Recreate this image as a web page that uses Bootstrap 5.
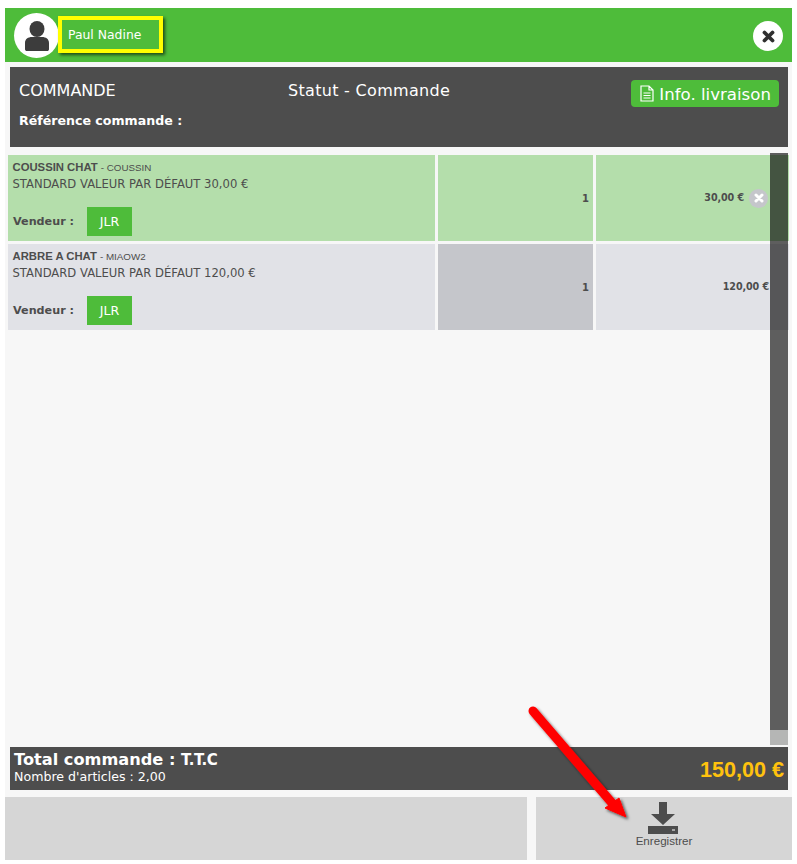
<!DOCTYPE html>
<html>
<head>
  <meta charset="UTF-8">
  <title>Commande</title>
  <link href="https://cdn.jsdelivr.net/npm/bootstrap@5.3.2/dist/css/bootstrap.min.css" rel="stylesheet">
  <style>
    html, body { height: 864px; overflow: hidden; background: #fff; }
    body { font-family: "DejaVu Sans", Verdana, sans-serif; color: #4d4d4d; }
    .shell { position: relative; margin: 8px 5px 0; width: 787px; height: 852px; background: #f7f7f7; }
    .topbar { height: 54px; background: #4ebc3a; padding: 5px 9px 0 9px; }
    .avatar { width: 45px; height: 45px; border-radius: 50%; background: #fff; }
    .username { width: 105px; height: 37px; margin: 3px 0 0 -1px; padding-left: 6px; border: 4px solid #ffff00; box-shadow: 2px 2px 3px rgba(0,0,0,.6); color: #fff; font-size: 12.4px; line-height: 30px; }
    .closer { width: 30px; height: 30px; border-radius: 50%; background: #fff; margin-top: 8px; }
    .orderhead { height: 80px; margin: 5px 4px 0 5px; background: #4d4d4d; color: #fff; padding: 14px 9px 0 9px; }
    .orderhead .title { font-size: 16px; line-height: 20px; }
    .orderhead .statut { font-size: 16px; line-height: 20px; letter-spacing: .3px; left: 278px; top: 14px; position: absolute; }
    .orderhead .ref { font-size: 12.6px; font-weight: 700; margin-top: 11px; }
    .info-btn { height: 27px; width: 148px; background: #4ebc3a; border-radius: 4px; color: #fff; font-size: 16.6px; line-height: 29px; padding-left: 9px; position: absolute; left: 626px; top: 72px; white-space: nowrap; }
    .info-btn svg { margin-bottom: 2px; }
    .rows { margin: 8px 4px 0 3px; height: 592px; }
    .itemrow { display: grid; grid-template-columns: 427px 155px 193px; column-gap: 3px; margin-bottom: 3px; height: 86px; width: 781px; }
    .itemrow > div { background: #b4deab; height: 86px; }
    .itemrow.alt > div { background: #e1e2e7; }
    .itemrow.alt > .qty { background: #c5c6cb; }
    .desc { padding: 6px 5px 0 4.5px; position: relative; }
    .desc .name { font-family: "Liberation Sans", Arial, sans-serif; font-size: 11.3px; font-weight: 700; line-height: 13px; }
    .desc .name small { font-size: 9.8px; font-weight: 400; }
    .desc .std { font-size: 11.6px; line-height: 16px; margin-top: 2px; }
    .seller { position: absolute; left: 5px; top: 52px; display: flex; align-items: center; gap: 13px; font-size: 11.2px; }
    .seller b { position: relative; top: 1px; }
    .seller span { width: 45px; height: 29px; line-height: 30px; background: #4ebc3a; color: #fff; text-align: center; font-size: 12.6px; }
    .qty, .price { display: flex; align-items: center; justify-content: flex-end; font-size: 9.6px; font-weight: 700; padding-right: 4px; }
    .qty { font-size: 10px; }
    .price { padding-right: 21px; letter-spacing: -.1px; }
    .alt .price { padding-right: 20px; }
    .removeit { width: 19px; height: 19px; border-radius: 50%; background: #c5c6cb; margin-left: 5px; }
    .scrollthumb { position: absolute; left: 765px; top: 145px; width: 18px; height: 577px; background: rgba(0,0,0,.62); }
    .scrollrest { position: absolute; left: 765px; top: 722px; width: 18px; height: 15px; background: #b5b6b5; }
    .totalbar { position: absolute; left: 5px; top: 739px; width: 778px; height: 43px; background: #4d4d4d; color: #fff; padding: 3px 4px; }
    .totalbar .big { font-size: 16.2px; font-weight: 700; line-height: 19px; }
    .totalbar .big b { font-size: 15px; letter-spacing: -.4px; }
    .totalbar .sub { font-size: 12.6px; line-height: 15px; margin-top: -1px; }
    .totalbar .amount { color: #ffc20e; font-family: "Liberation Sans", Arial, sans-serif; font-size: 21.6px; font-weight: 700; margin-top: 4px; }
    .footbar { position: absolute; left: 0; top: 789px; width: 787px; height: 63px; gap: 9px; }
    .footbar > div { background: #d6d6d6; }
    .spacer { width: 522px; }
    .savebtn { font-family: "Liberation Sans", Arial, sans-serif; font-size: 11.6px; line-height: 14px; }
    .savebtn svg { margin-right: 2px; }
    .arrow { position: absolute; left: 510px; top: 690px; }
  </style>
</head>
<body>
  <div class="shell">
    <div class="topbar d-flex justify-content-between">
      <div class="d-flex">
        <div class="avatar d-flex align-items-center justify-content-center">
          <svg width="24" height="30" viewBox="0 0 24 30"><ellipse cx="12" cy="8" rx="7.5" ry="8" fill="#3c3c3c"/><path d="M1 30 a3 3 0 0 1 -1 -3 v-5 c0 -4 3 -6 7 -6 h10 c4 0 7 2 7 6 v5 a3 3 0 0 1 -1 3z" fill="#3c3c3c"/></svg>
        </div>
        <div class="username">Paul Nadine</div>
      </div>
      <div class="closer d-flex align-items-center justify-content-center">
        <svg width="13" height="13" viewBox="0 0 13 13"><path d="M2.5 2.5 L10.5 10.5 M10.5 2.5 L2.5 10.5" stroke="#2f2f2f" stroke-width="3.8" stroke-linecap="round"/></svg>
      </div>
    </div>

    <div class="orderhead position-relative">
      <div class="title">COMMANDE</div>
      <div class="statut">Statut - Commande</div>
      <div class="ref">Référence commande :</div>
    </div>
    <div class="info-btn">
      <svg width="14" height="17" viewBox="0 0 14 17" class="align-text-bottom"><path d="M1 1 H9 L13 5 V16 H1z M9 1 V5 H13 M3.5 8 H10.5 M3.5 10.5 H10.5 M3.5 13 H10.5" fill="none" stroke="#fff" stroke-width="1.2"/></svg>
      Info. livraison
    </div>

    <div class="rows">
      <div class="itemrow">
        <div class="desc">
          <div class="name">COUSSIN CHAT <small>- COUSSIN</small></div>
          <div class="std">STANDARD VALEUR PAR DÉFAUT 30,00 €</div>
          <div class="seller"><b>Vendeur :</b> <span>JLR</span></div>
        </div>
        <div class="qty">1</div>
        <div class="price">30,00 €<i class="removeit d-flex align-items-center justify-content-center"><svg width="10" height="10" viewBox="0 0 10 10"><path d="M2 2 L8 8 M8 2 L2 8" stroke="#fff" stroke-width="3" stroke-linecap="round"/></svg></i></div>
      </div>
      <div class="itemrow alt">
        <div class="desc">
          <div class="name">ARBRE A CHAT <small>- MIAOW2</small></div>
          <div class="std">STANDARD VALEUR PAR DÉFAUT 120,00 €</div>
          <div class="seller"><b>Vendeur :</b> <span>JLR</span></div>
        </div>
        <div class="qty">1</div>
        <div class="price">120,00 €</div>
      </div>
    </div>

    <div class="scrollthumb"></div>
    <div class="scrollrest"></div>

    <div class="totalbar d-flex justify-content-between">
      <div>
        <div class="big">Total commande : <b>T.T.C</b></div>
        <div class="sub">Nombre d'articles : 2,00</div>
      </div>
      <div class="amount">150,00 €</div>
    </div>

    <div class="footbar d-flex">
      <div class="spacer"></div>
      <div class="savebtn flex-grow-1 d-flex flex-column align-items-center pt-1">
        <svg width="30" height="33" viewBox="0 0 30 33"><path d="M11 1 H19 V13 H27 L15 24 L3 13 H11z" fill="#4d4d4d"/><rect x="0" y="25" width="30" height="8" fill="#4d4d4d"/><rect x="24" y="28.5" width="3" height="1" fill="#fff"/></svg>
        <span>Enregistrer</span>
      </div>
    </div>

    <svg class="arrow" width="125" height="135" viewBox="0 0 125 135">
      <defs><filter id="sh"><feDropShadow dx="2" dy="2" stdDeviation="1.5" flood-color="#000" flood-opacity=".6"/></filter></defs>
      <g filter="url(#sh)"><path d="M18 13 L97 105" stroke="#f00" stroke-width="9" stroke-linecap="round"/><path d="M111 119 L90 110 L104 100z" fill="#f00" stroke="#f00" stroke-linejoin="round"/></g>
    </svg>
  </div>
</body>
</html>
